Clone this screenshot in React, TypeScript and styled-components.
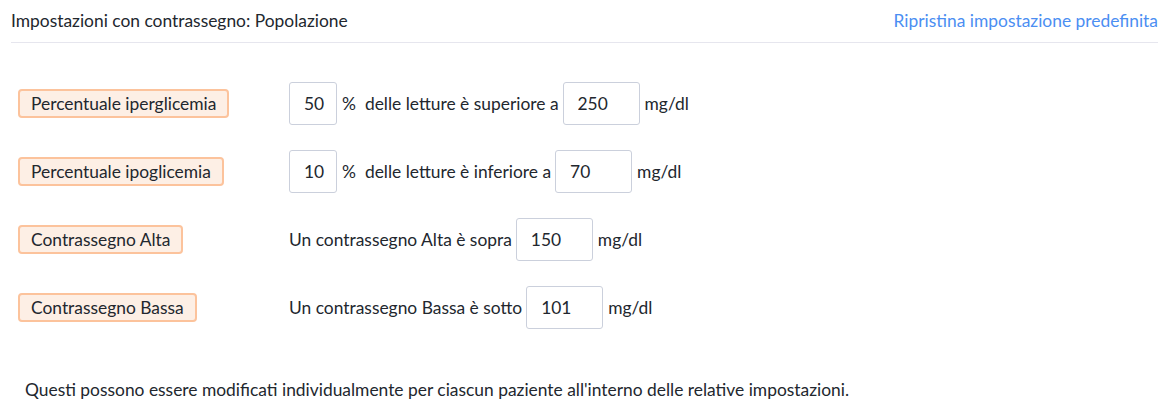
import styled, { createGlobalStyle } from "styled-components";

const GlobalStyle = createGlobalStyle`
    html, body {
        margin: 0;
        padding: 0;
        background: #fff;
    }
    body {
        font-family: Lato, "Open Sans", sans-serif;
        color: #22272e;
    }
`;

const Page = styled.div`
    padding: 0 9px 0 11px;
    width: 1167px;
    box-sizing: border-box;
`;

const Header = styled.div`
    display: flex;
    justify-content: space-between;
    align-items: center;
    height: 43px;
    border-bottom: 1px solid #e6e6ee;
    box-sizing: border-box;
`;

const Title = styled.div`
    font-size: 17.4px;
    padding-bottom: 1px;
`;

const ResetLink = styled.a`
    font-size: 17.4px;
    color: #4b8ef2;
    text-decoration: none;
    cursor: pointer;
    padding-bottom: 1px;
`;

const Rows = styled.div`
    display: flex;
    flex-direction: column;
    gap: 25px;
    padding: 39px 0 0 7px;
`;

const Row = styled.div`
    display: grid;
    grid-template-columns: 271px auto;
    align-items: center;
    height: 43px;
`;

const Tag = styled.span`
    justify-self: start;
    display: inline-flex;
    align-items: center;
    height: 29px;
    box-sizing: border-box;
    padding: 0 11px;
    border: 2px solid #fcc39c;
    border-radius: 4px;
    background: #fdefe5;
    font-size: 17.4px;
    color: #22272e;
`;

const Line = styled.div`
    display: flex;
    align-items: center;
    gap: 4px;
    font-size: 17.4px;
`;

const Field = styled.input<{ $w: number }>`
    width: ${(p) => p.$w}px;
    height: 43px;
    box-sizing: border-box;
    padding: 0 2px 0 14px;
    border: 1px solid #cbd0dc;
    border-radius: 3px;
    font-family: Lato, sans-serif;
    font-size: 17.4px;
    color: #22272e;
    outline: none;
`;

const Unit = styled.span<{ $after?: number }>`
    margin-left: 1px;
    margin-right: ${(p) => p.$after ?? 0}px;
`;

const Note = styled.p`
    margin: 50px 0 0 14px;
    font-size: 17.4px;
`;

const PctRow = ({ label, pct, text, value }: { label: string; pct: string; text: string; value: string }) => (
    <Row>
        <Tag>{label}</Tag>
        <Line>
            <Field $w={48} defaultValue={pct} />
            <Unit $after={5}>%</Unit>
            <span>{text}</span>
            <Field $w={77} defaultValue={value} />
            <Unit>mg/dl</Unit>
        </Line>
    </Row>
);

const FlagRow = ({ label, text, value }: { label: string; text: string; value: string }) => (
    <Row>
        <Tag>{label}</Tag>
        <Line>
            <span>{text}</span>
            <Field $w={77} defaultValue={value} />
            <Unit>mg/dl</Unit>
        </Line>
    </Row>
);

const App = () => {
    return (
        <Page>
            <GlobalStyle />
            <Header>
                <Title>Impostazioni con contrassegno: Popolazione</Title>
                <ResetLink>Ripristina impostazione predefinita</ResetLink>
            </Header>
            <Rows>
                <PctRow label="Percentuale iperglicemia" pct="50" text="delle letture è superiore a" value="250" />
                <PctRow label="Percentuale ipoglicemia" pct="10" text="delle letture è inferiore a" value="70" />
                <FlagRow label="Contrassegno Alta" text="Un contrassegno Alta è sopra" value="150" />
                <FlagRow label="Contrassegno Bassa" text="Un contrassegno Bassa è sotto" value="101" />
            </Rows>
            <Note>Questi possono essere modificati individualmente per ciascun paziente all'interno delle relative impostazioni.</Note>
        </Page>
    );
};

export default App;
